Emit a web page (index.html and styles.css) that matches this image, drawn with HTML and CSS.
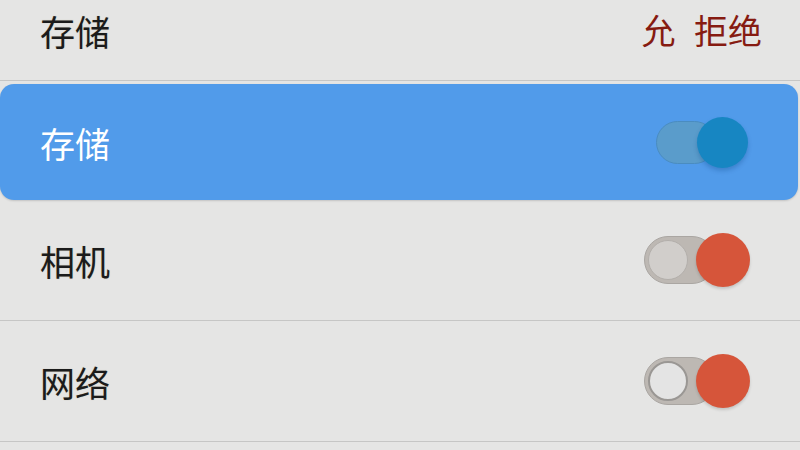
FILE: index.html
```html
<!DOCTYPE html>
<html lang="zh-CN">
<head>
  <meta charset="utf-8" />
  <meta name="viewport" content="width=device-width, initial-scale=1"/>
  <title>权限</title>
  <link rel="stylesheet" href="styles.css">
</head>
<body>
  <div class="list">
    <div class="row row-head">
      <span class="label">存储</span>
      <span class="actions">允 拒绝</span>
    </div>

    <div class="row row-active">
      <span class="label">存储</span>
      <div class="switch switch-blue">
        <div class="track"></div>
        <div class="knob"></div>
      </div>
    </div>

    <div class="row">
      <span class="label">相机</span>
      <div class="switch">
        <div class="track"><div class="dot"></div></div>
        <div class="knob"></div>
      </div>
    </div>

    <div class="row">
      <span class="label">网络</span>
      <div class="switch switch-light">
        <div class="track"><div class="dot"></div></div>
        <div class="knob"></div>
      </div>
    </div>
  </div>
</body>
</html>
```

FILE: styles.css
```css
body {
  margin: 0;
  background-color: #e5e5e4;
  font-family: "Noto Sans CJK SC", "Noto Sans", sans-serif;
  color: #1b1b1b;
  overflow: hidden;
}

.list {
  display: flex;
  flex-direction: column;
}

.row {
  display: flex;
  align-items: center;
  justify-content: space-between;
  height: 120px;
  padding: 0 50px 0 40px;
  border-bottom: 1px solid #c6c6c5;
}

.label {
  font-size: 35px;
  line-height: 1;
  text-shadow: 0 0 1px rgba(120, 100, 40, 0.35);
}

.row-head {
  height: 60px;
  padding-bottom: 20px;
  padding-right: 38px;
}

.actions {
  font-size: 34px;
  line-height: 1;
  color: #861b11;
  word-spacing: 11px;
}

.row-active {
  height: 116px;
  margin: 3px 2px 0 0;
  background-color: #519bea;
  border-radius: 14px;
  border-bottom: none;
  padding-right: 50px;
  box-shadow: 0 1px 2px rgba(0, 0, 0, 0.15);
}

.row-active .label {
  color: #fff;
  text-shadow: none;
}

/* switches */
.switch {
  display: flex;
  align-items: center;
}

.track {
  box-sizing: border-box;
  width: 72px;
  height: 48px;
  padding: 3px;
  border-radius: 24px;
  background-color: #bdb8b3;
  border: 1px solid #aaa6a2;
}

.dot {
  width: 40px;
  height: 40px;
  border-radius: 50%;
  background-color: #d1cecb;
  border: 1px solid #b3afab;
  box-sizing: border-box;
}

.knob {
  width: 54px;
  height: 54px;
  margin-left: -20px;
  border-radius: 50%;
  background-color: #d6553a;
  box-shadow: 0 2px 3px rgba(0, 0, 0, 0.15);
}

.switch-light .dot {
  background-color: #e4e4e4;
  border: 2px solid #9a9794;
}

.switch-blue .track {
  width: 60px;
  height: 43px;
  border-radius: 22px;
  background-color: #5a9ccb;
  border: 1px solid #4a8cc0;
}

.switch-blue .knob {
  width: 51px;
  height: 51px;
  margin-left: -19px;
  background-color: #1786c2;
  box-shadow: 0 3px 4px rgba(0, 60, 120, 0.25);
}
```
